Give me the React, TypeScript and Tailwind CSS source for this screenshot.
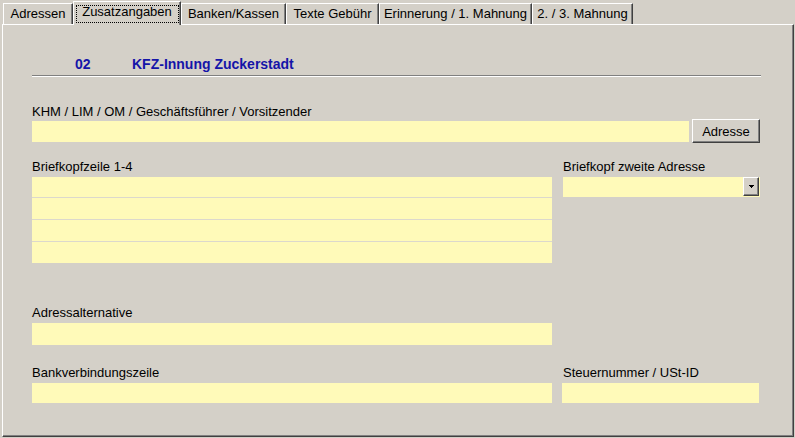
export default function App() {
  const raised =
    "border border-t-white border-l-white border-r-[#404040] border-b-[#404040] shadow-[inset_-1px_-1px_0_#808080] bg-[#d4d0c8]";
  return (
    <div className="w-[795px] h-[438px] bg-[#d4d0c8] overflow-hidden font-['Liberation_Sans',Arial,sans-serif] text-[13px] text-black">
      {/* Tab strip */}
      <div className="h-[24px] flex items-end pl-[3px]">
        <div className="w-[70px] h-[21px] border-l border-t border-white border-r border-r-[#404040] shadow-[inset_-1px_0_0_#808080] pt-[2px] leading-[15px] text-center">
          Adressen
        </div>
        <div className="relative z-10 w-[108px] h-[24px] -mb-px bg-[#d4d0c8] border-l border-t border-white border-r border-r-[#404040] shadow-[inset_-1px_0_0_#808080] pt-[2px] leading-[15px] text-center">
          Zusatzangaben
          <div className="absolute top-[3px] left-[2px] right-[1px] bottom-[2px] border border-dotted border-black" />
        </div>
        <div className="w-[105px] h-[21px] border-l border-t border-white border-r border-r-[#404040] shadow-[inset_-1px_0_0_#808080] pt-[2px] leading-[15px] text-center">
          Banken/Kassen
        </div>
        <div className="w-[93px] h-[21px] border-l border-t border-white border-r border-r-[#404040] shadow-[inset_-1px_0_0_#808080] pt-[2px] leading-[15px] text-center">
          Texte Gebühr
        </div>
        <div className="w-[153px] h-[21px] border-l border-t border-white border-r border-r-[#404040] shadow-[inset_-1px_0_0_#808080] pt-[2px] leading-[15px] text-center">
          Erinnerung / 1. Mahnung
        </div>
        <div className="w-[101px] h-[21px] border-l border-t border-white border-r border-r-[#404040] shadow-[inset_-1px_0_0_#808080] pt-[2px] leading-[15px] text-center">
          2. / 3. Mahnung
        </div>
      </div>

      {/* Panel */}
      <div className="ml-[2px] w-[792px] h-[413px] border-l border-t border-white border-r border-r-[#404040] border-b border-b-[#404040] shadow-[inset_-1px_-1px_0_#808080] pl-[29px]">
        {/* Header */}
        <div className="mt-[31px] ml-[43px] flex h-[16px] leading-[16px] text-[14px] font-bold text-[#1414a8]">
          <span className="w-[57px]">02</span>
          <span>KFZ-Innung Zuckerstadt</span>
        </div>
        <div className="mt-[3px] w-[729px] h-0 border-t border-t-[#808080] border-b border-b-white" />

        {/* KHM */}
        <div className="mt-[27px] h-[15px] leading-[15px]">KHM / LIM / OM / Geschäftsführer / Vorsitzender</div>
        <div className="flex items-start h-[24px] gap-[3px]">
          <div className="mt-[2px] w-[657px] h-[21px] bg-[#fffab9]" />
          <button className={`w-[68px] h-[24px] ${raised} text-[13px] leading-[15px] text-black`}>Adresse</button>
        </div>

        {/* Briefkopf */}
        <div className="mt-[16px] flex">
          <div className="w-[520px]">
            <div className="h-[15px] leading-[15px]">Briefkopfzeile 1-4</div>
            <div className="mt-[3px] flex flex-col gap-px bg-[#dcd8cc]">
              <div className="h-[20px] bg-[#fffab9]" />
              <div className="h-[21px] bg-[#fffab9]" />
              <div className="h-[21px] bg-[#fffab9]" />
              <div className="h-[21px] bg-[#fffab9]" />
            </div>
          </div>
          <div className="ml-[11px] w-[197px]">
            <div className="h-[15px] leading-[15px]">Briefkopf zweite Adresse</div>
            <div className="mt-[3px] h-[20px] bg-[#fffab9] flex justify-end items-start">
              <div className={`mr-[1px] w-[16px] h-[19px] ${raised} flex items-center justify-center`}>
                <svg width="5" height="3" viewBox="0 0 5 3" shapeRendering="crispEdges">
                  <rect x="0" y="0" width="5" height="1" fill="#000" />
                  <rect x="1" y="1" width="3" height="1" fill="#000" />
                  <rect x="2" y="2" width="1" height="1" fill="#000" />
                </svg>
              </div>
            </div>
          </div>
        </div>

        {/* Adressalternative */}
        <div className="mt-[42px] h-[15px] leading-[15px]">Adressalternative</div>
        <div className="mt-[3px] w-[520px] h-[22px] bg-[#fffab9]" />

        {/* Bank / Steuer */}
        <div className="mt-[20px] flex">
          <div className="w-[520px]">
            <div className="h-[15px] leading-[15px]">Bankverbindungszeile</div>
            <div className="mt-[3px] h-[20px] bg-[#fffab9]" />
          </div>
          <div className="ml-[10px] w-[197px]">
            <div className="h-[15px] leading-[15px] pl-[1px]">Steuernummer / USt-ID</div>
            <div className="mt-[3px] h-[20px] bg-[#fffab9]" />
          </div>
        </div>
      </div>
    </div>
  );
}
